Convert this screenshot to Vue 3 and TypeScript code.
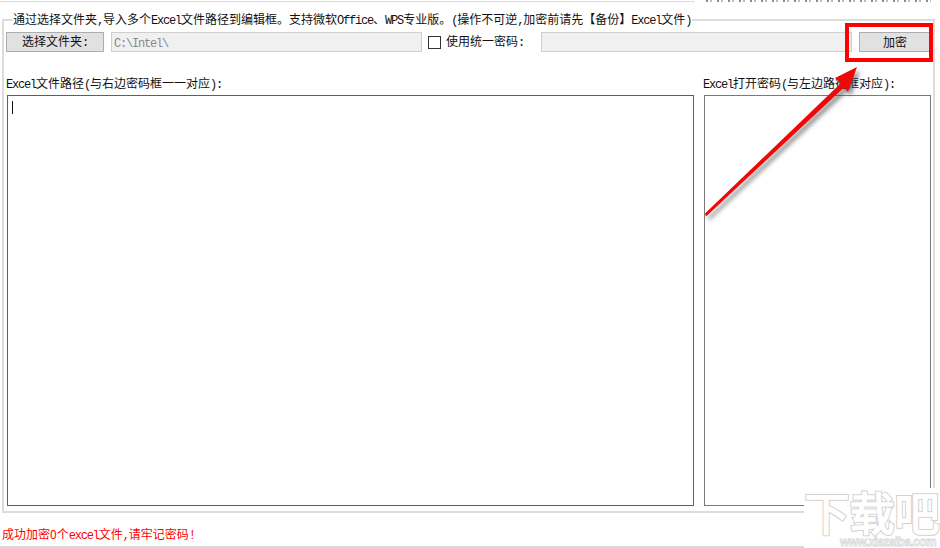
<script setup lang="ts">
const title = "Excel";
</script>

<template>
  <div class="page">
    <div class="top">
      <div class="top-left"></div>
      <div class="top-right"></div>
    </div>
    <fieldset class="group">
      <legend class="legend">通过选择文件夹<i class="half">,</i>导入多个<span class="l">{{ title }}</span>文件路径到编辑框。支持微软<span class="l">Office</span>、<span class="l">WPS</span>专业版。<i class="half">(</i>操作不可逆<i class="half">,</i>加密前请先【备份】<span class="l">{{ title }}</span>文件<i class="half">)</i></legend>
      <div class="row">
        <button class="btn pick">选择文件夹<i class="half">:</i></button>
        <div class="field path"><span class="l">C:\Intel\</span></div>
        <span class="check"></span>
        <span class="check-label">使用统一密码<i class="half">:</i></span>
        <div class="field pass"></div>
        <button class="btn go">加密</button>
      </div>
      <div class="columns">
        <div class="col left">
          <div class="label"><span class="l">{{ title }}</span>文件路径<i class="half">(</i>与右边密码框一一对应<i class="half">):</i></div>
          <div class="box active"><span class="caret"></span></div>
        </div>
        <div class="col right">
          <div class="label"><span class="l">{{ title }}</span>打开密码<i class="half">(</i>与左边路径框对应<i class="half">):</i></div>
          <div class="box"></div>
        </div>
      </div>
    </fieldset>
    <div class="status">成功加密0个<span class="l">excel</span>文件<i class="half">,</i>请牢记密码<i class="half">!</i></div>

    <div class="highlight"></div>
    <svg class="arrow" width="940" height="548" viewBox="0 0 940 548">
      <polygon points="705,213.5 706,216.5 844,87.5 848,92 857,67 835,78 840.5,83.5" fill="#f00808" />
    </svg>
    <div class="mark">
      <div class="mark-cn">下载吧</div>
      <div class="mark-en">www.xiazaiba.com</div>
    </div>
  </div>
</template>

<style>
html, body { margin: 0; background: #fff; }
</style>

<style scoped>
.page {
  position: relative;
  width: 940px;
  height: 548px;
  overflow: hidden;
  background: #fff;
  color: #111;
  font-family: "Noto Sans CJK SC", sans-serif;
  font-size: 12px;
  line-height: 14px;
}
.l, .half {
  font-style: normal;
  font-family: "Liberation Mono", monospace;
  font-size: 12px;
  letter-spacing: -1.2px;
}
.top { display: flex; height: 12px; align-items: flex-start; }
.top-left {
  width: 693px;
  height: 1px;
  margin-top: 1px;
  border-top: 1px solid #dcdcdc;
  border-right: 1px solid #dcdcdc;
}
.top-right {
  margin-left: 12px;
  width: 225px;
  height: 2px;
  background: repeating-linear-gradient(90deg, #8c8c8c 0 2px, #fff 2px 4px, #bbb 4px 6px, #fff 6px 11px);
}
.group {
  box-sizing: border-box;
  margin: 0 5px 0 2px;
  padding: 0 0 0 3px;
  width: 933px;
  height: 501px;
  border: 2px solid #dcdcdc;
  min-inline-size: 0;
  display: flex;
  flex-direction: column;
}
.legend { margin-left: 5px; padding: 0 1px; line-height: 14px; white-space: nowrap; }
.row { display: flex; align-items: center; height: 20px; margin-top: 4px; }
.btn {
  box-sizing: border-box;
  height: 20px;
  padding: 0;
  background: #e1e1e1;
  border: 1px solid #adadad;
  font: inherit;
  color: #111;
}
.pick { width: 98px; margin-left: -1px; }
.field {
  box-sizing: border-box;
  height: 20px;
  background: #f0f0f0;
  border: 1px solid #cfcfcf;
  color: #8a8a8a;
  padding-left: 2px;
  line-height: 17px;
}
.path { width: 311px; margin-left: 7px; }
.check {
  box-sizing: border-box;
  width: 13px;
  height: 13px;
  margin-left: 6px;
  border: 1px solid #333;
  background: #fff;
}
.check-label { width: 95px; margin-left: 5px; white-space: nowrap; }
.pass { width: 311px; }
.go { width: 72px; margin-left: 7px; }
.columns { display: flex; flex: 1; margin-top: 22px; }
.col { display: flex; flex-direction: column; }
.left { width: 687px; }
.right { width: 227px; margin-left: 10px; }
.label { height: 21px; line-height: 17px; white-space: nowrap; margin-left: -1px; }
.box {
  box-sizing: border-box;
  height: 411px;
  background: #fff;
  border: 1px solid #7a7a7a;
}
.box.active { border-color: #0078d7; }
.caret { display: block; width: 1px; height: 13px; margin: 5px 0 0 4px; background: #111; }
.status {
  box-sizing: border-box;
  height: 35px;
  padding: 13px 0 0 2px;
  border-bottom: 2px solid #d9d9d9;
  color: #f00;
  line-height: 16px;
  white-space: nowrap;
}
.highlight {
  position: absolute;
  left: 845px;
  top: 23px;
  width: 88px;
  height: 39px;
  box-sizing: border-box;
  border: 4px solid #f00;
}
.arrow {
  position: absolute;
  left: 0;
  top: 0;
  pointer-events: none;
  filter: drop-shadow(3px 4px 2px rgba(70, 70, 70, 0.6));
}
.mark {
  position: absolute;
  left: 804px;
  top: 488px;
  width: 136px;
  height: 60px;
  background: #fff;
  color: #fff;
  text-align: center;
  isolation: isolate;
}
.mark-cn {
  position: relative;
  height: 48px;
  font-size: 45px;
  line-height: 48px;
  font-weight: 400;
  white-space: nowrap;
  -webkit-text-stroke: 1.5px #fff;
}
.mark-cn::before {
  content: "下载吧";
  position: absolute;
  inset: 0;
  z-index: -1;
  -webkit-text-stroke: 3.5px #d2d2d2;
}
.mark-en {
  margin-left: 32px;
  font-family: "Liberation Sans", sans-serif;
  font-size: 12px;
  line-height: 12px;
  font-weight: 700;
  letter-spacing: -0.6px;
  white-space: nowrap;
  -webkit-text-stroke: 0.8px #d8d8d8;
}
</style>
